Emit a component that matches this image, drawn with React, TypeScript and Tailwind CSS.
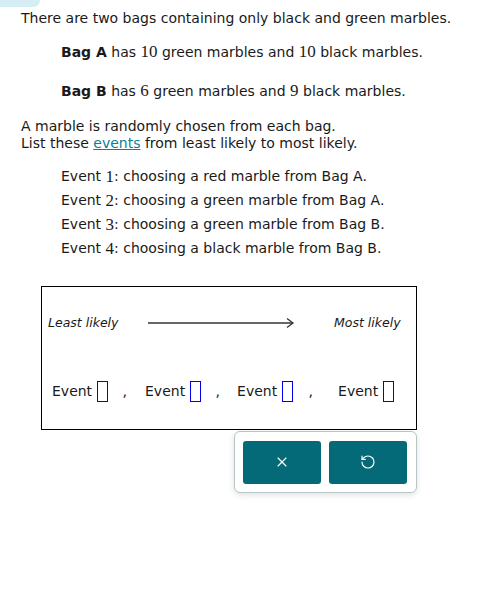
import { X, RotateCcw } from 'lucide-react';

const sans = { fontFamily: '"DejaVu Sans", Verdana, sans-serif' };
const serif = "font-['Liberation_Serif',serif] text-[17px] leading-none";

function Slot() {
  return <span className="inline-block w-[11px] h-[21px] border border-[#0000ee] align-middle" />;
}

function Item({ n }: { n: number }) {
  return (
    <div className="h-[24px] flex items-center">
      Event&nbsp;<span className={serif}>{n}</span>: {n === 1 ? 'choosing a red marble from Bag A.' : n === 2 ? 'choosing a green marble from Bag A.' : n === 3 ? 'choosing a green marble from Bag B.' : 'choosing a black marble from Bag B.'}
    </div>
  );
}

export default function App() {
  return (
    <div className="relative w-[477px] h-[595px] bg-white text-[#1a1a1a] text-[14px]" style={sans}>
      <div className="absolute left-0 top-0 w-[40px] h-[7px] bg-[#d4eef4] rounded-br-[8px]" />
      <div className="pt-[9px] pl-[21px]">
        <p className="h-[18px] leading-[18px]">There are two bags containing only black and green marbles.</p>
        <p className="mt-[16px] ml-[40px] h-[18px] leading-[18px]">
          <b>Bag A</b> has <span className={serif}>10</span> green marbles and <span className={serif}>10</span> black marbles.
        </p>
        <p className="mt-[21px] ml-[40px] h-[18px] leading-[18px]">
          <b>Bag B</b> has <span className={serif}>6</span> green marbles and <span className={serif}>9</span> black marbles.
        </p>
        <p className="mt-[18px] leading-[17px]">
          A marble is randomly chosen from each bag.
          <br />
          List these <span className="text-[#0a7f98] underline">events</span> from least likely to most likely.
        </p>
        <div className="mt-[12px] ml-[40px]">
          <Item n={1} />
          <Item n={2} />
          <Item n={3} />
          <Item n={4} />
        </div>
      </div>
      <div className="ml-[41px] mt-[26px] w-[376px] h-[144px] border border-black">
        <div className="mt-[27px] flex items-center h-[18px] text-[12.5px] italic">
          <span className="ml-[6px] w-[99px]">Least likely</span>
          <svg width="150" height="12" className="ml-[1px]" viewBox="0 0 150 12">
            <line x1="0" y1="6" x2="144" y2="6" stroke="#666" strokeWidth="2" />
            <path d="M139 1.5 L145 6 L139 10.5" fill="none" stroke="#333" strokeWidth="1.3" />
          </svg>
          <span className="ml-[36px]">Most likely</span>
        </div>
        <div className="mt-[48px] flex items-center h-[22px]">
          <span className="ml-[10px]">Event&nbsp;</span>
          <Slot />
          <span className="ml-[15px]">,</span>
          <span className="ml-[18px]">Event&nbsp;</span>
          <Slot />
          <span className="ml-[15px]">,</span>
          <span className="ml-[17px]">Event&nbsp;</span>
          <Slot />
          <span className="ml-[16px]">,</span>
          <span className="ml-[25px]">Event&nbsp;</span>
          <Slot />
        </div>
      </div>
      <div className="ml-[234px] mt-[1px] w-[183px] h-[62px] border border-[#b8c4c8] rounded-[6px] bg-white shadow-[0_2px_6px_rgba(0,0,0,0.12)] flex items-center gap-[8px] px-[8px]">
        <button className="w-[78px] h-[43px] rounded-[3px] bg-[#046a78] flex items-center justify-center">
          <X className="w-[16px] h-[16px] text-white" strokeWidth={1.75} />
        </button>
        <button className="w-[78px] h-[43px] rounded-[3px] bg-[#046a78] flex items-center justify-center">
          <RotateCcw className="w-[16px] h-[16px] text-white" strokeWidth={1.75} />
        </button>
      </div>
    </div>
  );
}
